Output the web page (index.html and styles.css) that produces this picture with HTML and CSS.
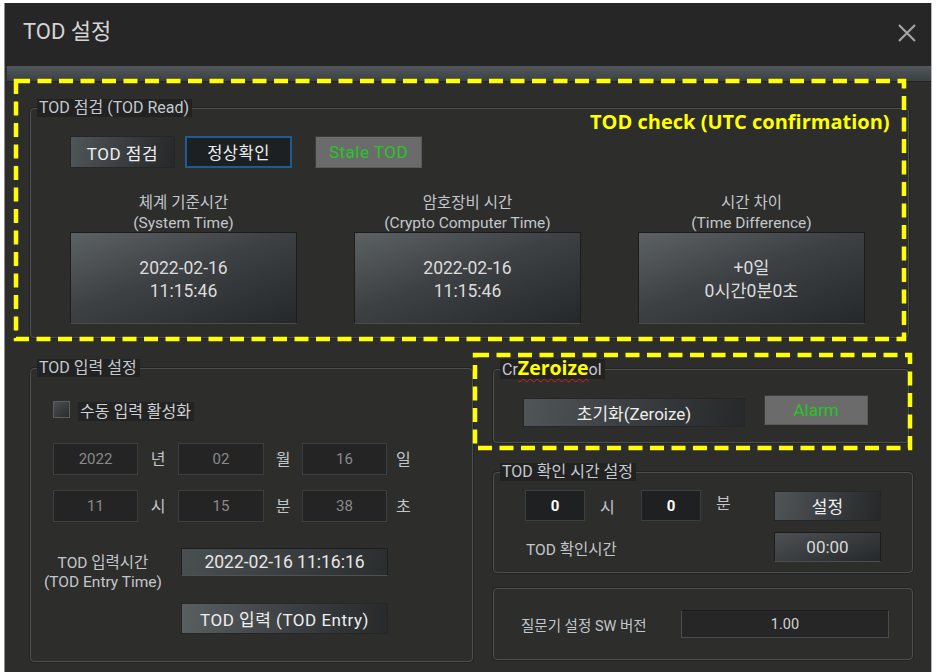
FILE: index.html
```html
<!DOCTYPE html>
<html lang="ko">
<head>
    <meta charset="UTF-8">
    <meta name="viewport" content="width=device-width, initial-scale=1.0">
    <title>TOD 설정</title>
    <link rel="stylesheet" href="styles.css">
</head>
<body>
<div class="window">
    <div class="titlebar">
        <h1>TOD 설정</h1>
        <svg class="close" width="20" height="20" viewBox="0 0 20 20">
            <path d="M2 2 L18 18 M18 2 L2 18" stroke="#a4a4a4" stroke-width="2.2" fill="none"/>
        </svg>
    </div>
    <div class="tabbar"></div>

    <div class="content">
        <!-- TOD 점검 -->
        <fieldset class="group read">
            <legend>TOD 점검 (TOD Read)</legend>
            <div class="group-body">
                <div class="btn-row">
                    <button class="btn btn-check">TOD 점검</button>
                    <button class="btn btn-ok">정상확인</button>
                    <button class="btn btn-lamp btn-stale">Stale TOD</button>
                </div>
                <div class="times">
                    <div class="time-col">
                        <div class="time-label">체계 기준시간<br>(System Time)</div>
                        <div class="time-box">2022-02-16<br>11:15:46</div>
                    </div>
                    <div class="time-col">
                        <div class="time-label">암호장비 시간<br>(Crypto Computer Time)</div>
                        <div class="time-box">2022-02-16<br>11:15:46</div>
                    </div>
                    <div class="time-col">
                        <div class="time-label">시간 차이<br>(Time Difference)</div>
                        <div class="time-box">+0일<br>0시간0분0초</div>
                    </div>
                </div>
            </div>
        </fieldset>

        <div class="lower">
            <!-- TOD 입력 설정 -->
            <fieldset class="group entry">
                <legend>TOD 입력 설정</legend>
                <label class="check-row">
                    <span class="checkbox"></span>
                    <span class="check-text">수동 입력 활성화</span>
                </label>
                <div class="date-grid">
                    <div class="field">2022</div><span class="unit">년</span>
                    <div class="field">02</div><span class="unit">월</span>
                    <div class="field">16</div><span class="unit unit-last">일</span>
                    <div class="field">11</div><span class="unit">시</span>
                    <div class="field">15</div><span class="unit">분</span>
                    <div class="field">38</div><span class="unit unit-last">초</span>
                </div>
                <div class="entry-row">
                    <div class="entry-label">TOD 입력시간<br>(TOD Entry Time)</div>
                    <div class="entry-box">2022-02-16 11:16:16</div>
                </div>
                <button class="btn btn-entry">TOD 입력 (TOD Entry)</button>
            </fieldset>

            <div class="side">
                <fieldset class="group crypto">
                    <legend>Cr<span class="note-zero">Zeroize</span>ol</legend>
                    <div class="group-body">
                        <div class="crypto-row">
                            <button class="btn btn-zero">초기화(Zeroize)</button>
                            <button class="btn btn-lamp btn-alarm">Alarm</button>
                        </div>
                    </div>
                </fieldset>

                <fieldset class="group confirm">
                    <legend>TOD 확인 시간 설정</legend>
                    <div class="group-body confirm-grid">
                        <div class="field field-num">0</div><span class="unit">시</span>
                        <div class="field field-num">0</div><span class="unit unit-up">분</span>
                        <button class="btn btn-set">설정</button>
                        <span class="confirm-label">TOD 확인시간</span>
                        <div class="confirm-box">00:00</div>
                    </div>
                </fieldset>

                <div class="group version">
                    <span class="version-label">질문기 설정 SW 버전</span>
                    <div class="version-box">1.00</div>
                </div>
            </div>
        </div>
    </div>

    <!-- annotations -->
    <svg class="mark mark-read" width="894" height="264">
        <rect x="3" y="3" width="888" height="258" fill="none" stroke="#ffff00" stroke-width="4.5" stroke-dasharray="14 7.5"/>
    </svg>
    <div class="note-read">TOD check (UTC confirmation)</div>
    <svg class="mark mark-zero" width="441" height="100">
        <rect x="3" y="3" width="435" height="93" fill="none" stroke="#ffff00" stroke-width="4.5" stroke-dasharray="14 7.5"/>
    </svg>
</div>
</body>
</html>
```

FILE: styles.css
```css
/* TOD 설정 dialog */
body {
    margin: 0;
    background-color: #ffffff;
    font-family: Roboto, "Noto Sans CJK KR", sans-serif;
}
.window {
    position: relative;
    box-sizing: border-box;
    width: 928px;
    height: 669px;
    margin: 3px 0 0 4px;
    background-color: #2d2d2b;
    border-left: 1px solid #8e8e8e;
    border-right: 1px solid #b4b4b4;
    overflow: hidden;
}
.titlebar {
    display: flex;
    justify-content: space-between;
    align-items: flex-start;
    height: 63px;
    box-sizing: border-box;
    padding: 15px 14px 0 18px;
    background-color: #262626;
}
.titlebar h1 { margin: 0; font-size: 22px; line-height: 28px; font-weight: normal; color: #d4d4d4; }
.close { margin-top: 5px; }
.tabbar {
    height: 16px;
    margin-left: 2px;
    background: linear-gradient(#51575a, #3b4043);
    border-bottom: 1px solid #202224;
    box-sizing: border-box;
}
.content { padding: 17px 0 0 25px; }

/* group boxes */
.group {
    box-sizing: border-box;
    margin: 0;
    padding: 0;
    min-width: 0;
    border: 1px solid #4b4f52;
    border-radius: 4px;
    box-shadow: 0 0 0 1px #232323;
}
.group legend {
    margin-left: 6px;
    padding: 0 3px 0 2px;
    font-size: 16px;
    line-height: 18px;
    color: #c4c9ce;
    background-color: #222222;
}
.read { width: 879px; height: 239px; }
.read .group-body { padding: 19px 0 0 39px; }
.lower { display: flex; gap: 20px; margin-top: 21px; }
.entry { width: 443px; height: 303px; padding-top: 23px; }
.side { display: flex; flex-direction: column; width: 420px; }
.crypto { width: 416px; height: 84px; }
.crypto .group-body { padding: 19px 0 0 29px; }
.confirm { width: 420px; height: 110px; margin-top: 20px; }
.version {
    display: flex;
    align-items: center;
    height: 72px;
    margin-top: 15px;
    padding-left: 27px;
}

/* buttons */
.btn {
    box-sizing: border-box;
    font-family: inherit;
    font-size: 17px;
    color: #eeeeee;
    border: 1px solid #242628;
    background: linear-gradient(100deg, #505557 0%, #3a3e40 50%, #262829 100%);
    padding: 0;
    cursor: pointer;
}
.btn-row { display: flex; height: 32px; }
.btn-check { width: 105px; height: 32px; letter-spacing: 0.5px; }
.btn-ok {
    width: 107px;
    height: 32px;
    margin-left: 10px;
    font-size: 16.5px;
    letter-spacing: 0.5px;
    background: #1c2022;
    border: 2px solid #1d5b92;
}
.btn-lamp {
    background: #6b6b6b;
    border: 1px solid #5a5a5a;
    border-top-color: #3c3c3c;
    border-left-color: #3c3c3c;
    color: #26c626;
}
.btn-stale { width: 107px; height: 32px; margin-left: 23px; letter-spacing: 0.5px; }

/* time displays */
.times {
    display: grid;
    grid-template-columns: 227px 227px 227px;
    column-gap: 57px;
    margin-top: 23px;
}
.time-label { padding-top: 2px; text-align: center; font-size: 15.5px; line-height: 20px; color: #c2c7cc; }
.time-box {
    display: flex;
    align-items: center;
    justify-content: center;
    height: 92px;
    margin-top: -1px;
    padding-top: 4px;
    box-sizing: border-box;
    text-align: center;
    font-size: 17.5px;
    line-height: 23px;
    color: #dcdcdc;
    background: linear-gradient(160deg, #5c6163 0%, #3d4143 45%, #25282a 100%);
    border: 1px solid #1c1c1c;
    border-bottom-color: #4a4c4d;
}

/* manual entry */
.check-row { display: flex; align-items: flex-start; padding-left: 22px; }
.checkbox {
    width: 15px;
    height: 15px;
    margin-top: 1px;
    border: 1px solid #5a5e60;
    background: linear-gradient(135deg, #4a4e50, #2a2c2d);
}
.check-text {
    margin: 2px 0 0 8px;
    padding: 0 3px 0 2px;
    font-size: 16px;
    line-height: 19px;
    color: #cfd2d4;
    background-color: #232323;
}
.date-grid {
    display: grid;
    grid-template-columns: 85px 40px 86px 38px 85px auto;
    grid-auto-rows: 32px;
    row-gap: 15px;
    margin-top: 22px;
    padding-left: 22px;
}
.field {
    box-sizing: border-box;
    height: 32px;
    line-height: 31px;
    text-align: center;
    font-size: 15px;
    color: #8a8a8a;
    background-color: #242424;
    border: 1px solid #3a3f42;
}
.unit {
    box-sizing: border-box;
    height: 32px;
    padding-top: 2px;
    font-size: 16px;
    line-height: 30px;
    text-align: center;
    color: #c2c6ca;
}
.unit-last { text-align: left; padding-left: 9px; }
.entry-row { display: flex; margin-top: 26px; }
.entry-label {
    width: 144px;
    padding-top: 6px;
    text-align: center;
    font-size: 15.5px;
    line-height: 19px;
    color: #c2c7cc;
}
.entry-box {
    box-sizing: border-box;
    width: 207px;
    height: 28px;
    margin-left: 6px;
    line-height: 27px;
    text-align: center;
    font-size: 17.5px;
    color: #e6e6e6;
    background: linear-gradient(100deg, #4a4f51, #2b2e2f);
    border: 1px solid #1c1d1e;
    border-bottom-color: #4f5254;
}
.btn-entry {
    display: block;
    width: 207px;
    height: 31px;
    margin: 11px 0 0 150px;
    letter-spacing: 0.5px;
    background: linear-gradient(100deg, #5a5f61 0%, #3d4143 50%, #27292a 100%);
}

/* crypto control */
.crypto-row { display: flex; align-items: center; gap: 19px; }
.btn-zero { width: 222px; height: 29px; }
.btn-alarm { width: 104px; height: 30px; margin-top: -5px; }

/* confirm time */
.confirm-grid {
    display: grid;
    grid-template-columns: 60px 56px 60px 73px 107px;
    grid-template-rows: 31px 30px;
    row-gap: 11px;
    align-items: center;
    padding: 9px 0 0 31px;
}
.field-num { height: 31px; line-height: 30px; color: #ffffff; font-weight: bold; background-color: #1f2021; }
.confirm-grid .unit { height: 31px; text-align: left; padding-left: 15px; line-height: 31px; }
.confirm-grid .unit-up { padding-top: 0; line-height: 28px; }
.btn-set { width: 107px; height: 30px; }
.confirm-label { grid-column: 1 / 5; font-size: 15.5px; color: #c2c7cc; padding: 2px 0 0 1px; }
.confirm-box {
    box-sizing: border-box;
    height: 30px;
    line-height: 29px;
    text-align: center;
    font-size: 17px;
    color: #d8d8d8;
    background: linear-gradient(160deg, #4d5153, #25282a);
    border: 1px solid #1b1b1b;
    border-bottom-color: #4c4e50;
}

/* version */
.version-label { width: 160px; font-size: 14.5px; color: #c2c7cc; }
.version-box {
    box-sizing: border-box;
    width: 208px;
    height: 28px;
    line-height: 27px;
    text-align: center;
    font-size: 14.5px;
    color: #d2d2d2;
    background-color: #262626;
    border: 1px solid #4a4d4f;
    border-top-color: #1c1c1c;
}

/* yellow annotations drawn over the dialog */
.mark { position: absolute; }
.mark-read { left: 8px; top: 75px; }
.mark-zero { left: 467px; top: 349px; }
.note-read {
    position: absolute;
    left: 585px;
    top: 106px;
    font-family: "Open Sans", "Noto Sans", sans-serif;
    font-size: 20px;
    line-height: 26px;
    font-weight: bold;
    color: #ffff00;
}
.note-zero {
    font-family: "Open Sans", "Noto Sans", sans-serif;
    font-size: 19.5px;
    font-weight: bold;
    color: #ffff00;
    text-decoration: underline wavy #d42020;
    text-decoration-thickness: 1px;
    text-underline-offset: 3px;
}
```
